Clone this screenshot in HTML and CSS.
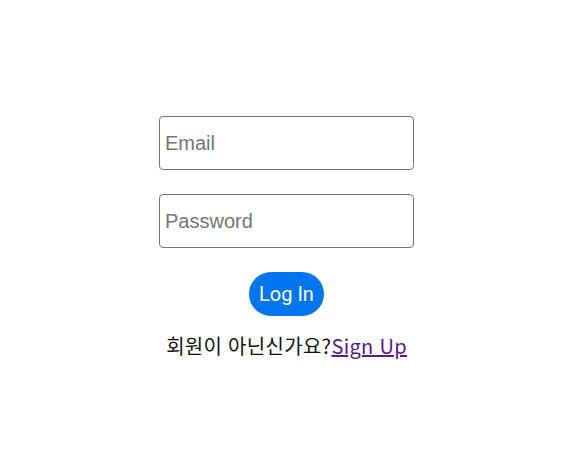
FILE: index.html
```html
<!DOCTYPE html>
<html lang="ko">
<head>
<meta charset="utf-8">
<link rel="stylesheet" href="styles.css">
</head>
<body>
<main class="page">
  <form class="login">
    <input class="field" type="email" placeholder="Email">
    <input class="field" type="password" placeholder="Password">
    <button class="btn" type="button">Log In</button>
    <p class="signup">회원이 아닌신가요?<a href="#" class="link">Sign Up</a></p>
  </form>
</main>
</body>
</html>
```
FILE: styles.css
```css
html, body {
  margin: 0;
  padding: 0;
  background: #fff;
}
.page {
  display: flex;
  justify-content: center;
  padding-top: 116px;
  padding-right: 2px;
}
.login {
  display: flex;
  flex-direction: column;
  align-items: center;
  gap: 24px;
  width: 255px;
}
.field {
  box-sizing: border-box;
  width: 255px;
  height: 54px;
  margin: 0;
  padding: 0 5px;
  border: 1px solid #767676;
  border-radius: 4px;
  font-family: "Liberation Sans", Arial, sans-serif;
  font-size: 20px;
  color: #000;
  outline: none;
}
.field::placeholder {
  color: #757575;
}
.btn {
  box-sizing: border-box;
  height: 44px;
  padding: 0 10px;
  border: none;
  border-radius: 22px;
  background: #0075f0;
  color: #fff;
  font-family: Roboto, "Liberation Sans", sans-serif;
  font-size: 20px;
  cursor: pointer;
}
.signup {
  margin: -8px 0 0;
  font-family: "Noto Sans CJK KR", "Noto Sans", sans-serif;
  font-size: 20px;
  line-height: 28px;
  letter-spacing: 0.3px;
  color: #111;
  white-space: nowrap;
}
.link {
  color: #551a8b;
  text-decoration: underline;
}
```
